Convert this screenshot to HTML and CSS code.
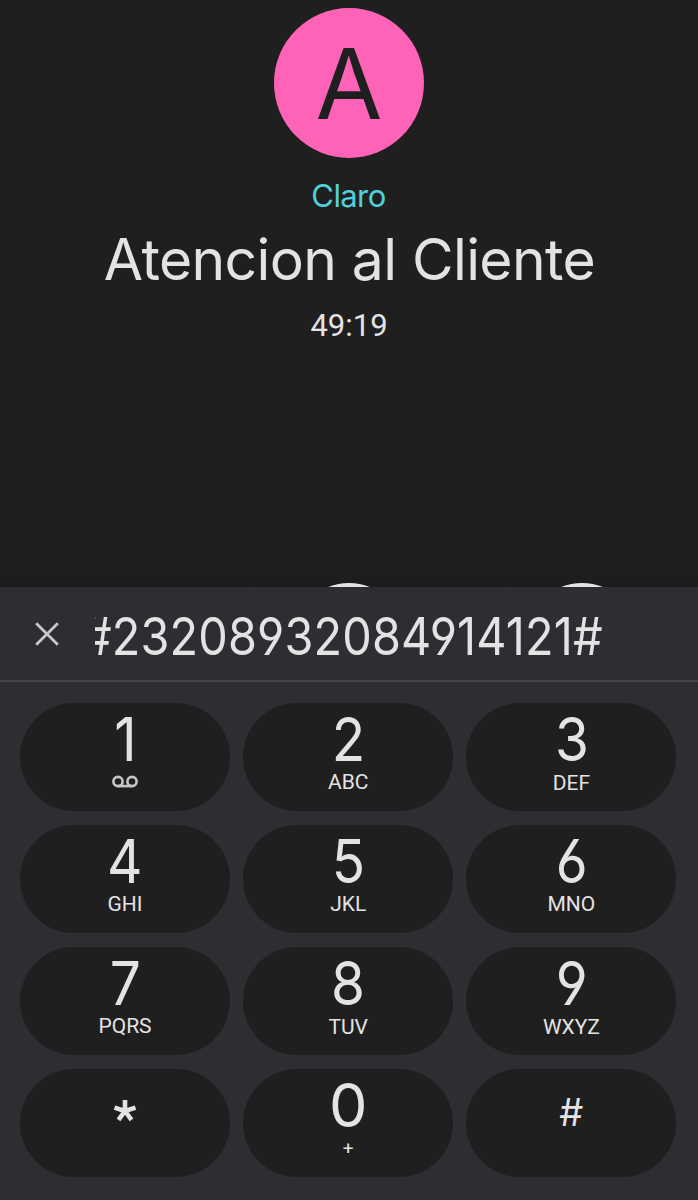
FILE: index.html
```html
<!DOCTYPE html>
<html lang="es">
<head>
  <meta charset="UTF-8">
  <meta name="viewport" content="width=device-width, initial-scale=1.0">
  <title>Atencion al Cliente</title>
  <link rel="stylesheet" href="styles.css">
</head>
<body>

  <div class="call">
    <div class="avatar">A</div>
    <div class="carrier">Claro</div>
    <h1 class="name">Atencion al Cliente</h1>
    <div class="timer">49:19</div>
    <div class="call-actions">
      <span></span>
      <span class="action"></span>
      <span class="action"></span>
    </div>
  </div>

  <div class="dialpad">
    <div class="display">
      <svg class="close" viewBox="0 0 24 24" width="24" height="24">
        <path d="M1.2 1.2L22.8 22.8M22.8 1.2L1.2 22.8" />
      </svg>
      <div class="digits"><span>#23208932084914121#</span></div>
    </div>

    <div class="keys">
      <div class="key">
        <span class="num">1</span>
        <svg class="voicemail" viewBox="0 0 26 13" width="26" height="13">
          <circle cx="6" cy="6.5" r="4.6" />
          <circle cx="20" cy="6.5" r="4.6" />
          <path d="M6 11.1H20" />
        </svg>
      </div>
      <div class="key"><span class="num">2</span><span class="letters">ABC</span></div>
      <div class="key"><span class="num">3</span><span class="letters low">DEF</span></div>
      <div class="key"><span class="num">4</span><span class="letters">GHI</span></div>
      <div class="key"><span class="num">5</span><span class="letters">JKL</span></div>
      <div class="key"><span class="num">6</span><span class="letters">MNO</span></div>
      <div class="key"><span class="num">7</span><span class="letters">PQRS</span></div>
      <div class="key"><span class="num">8</span><span class="letters low">TUV</span></div>
      <div class="key"><span class="num">9</span><span class="letters low">WXYZ</span></div>
      <div class="key symbol">
        <svg class="star" viewBox="-12 -12 24 24" width="24" height="24">
          <path d="M0 0V-11M0 0L10.5 -3.4M0 0L6.5 8.9M0 0L-6.5 8.9M0 0L-10.5 -3.4" />
        </svg>
      </div>
      <div class="key"><span class="num zero">0</span><span class="letters plus">+</span></div>
      <div class="key symbol"><span class="hash">#</span></div>
    </div>
  </div>

</body>
</html>
```

FILE: styles.css
```css
/* General Styles */
body {
  font-family: Inter, Roboto, sans-serif;
  font-feature-settings: "cv03", "cv04";
  background-color: #1f1f1f;
  color: #e3e3e3;
  margin: 0;
  height: 1200px;
  overflow: hidden;
}

/* Call header */
.call {
  display: flex;
  flex-direction: column;
  align-items: center;
  height: 587px;
  box-sizing: border-box;
  padding-top: 8px;
  overflow: hidden;
  background: linear-gradient(#1f1f1f 570px, #1b1b1b 587px);
}

.avatar {
  width: 150px;
  height: 150px;
  border-radius: 50%;
  background-color: #ff63b8;
  color: #1f1f1f;
  font-size: 97px;
  line-height: 152px;
  text-align: center;
  flex-shrink: 0;
}

.carrier {
  color: #4fd1dc;
  font-size: 31px;
  line-height: 40px;
  margin-top: 18px;
  margin-right: 1px;
  letter-spacing: -0.6px;
}

.name {
  margin: 13px 0 0 1px;
  font-size: 57px;
  font-weight: 400;
  line-height: 62px;
  letter-spacing: -0.6px;
  white-space: nowrap;
}

.timer {
  font-family: Roboto, sans-serif;
  font-size: 31px;
  line-height: 40px;
  margin-top: 15px;
}

.call-actions {
  display: grid;
  grid-template-columns: repeat(3, 233px);
  justify-items: center;
  margin-top: 237px;
}

.action {
  width: 112px;
  height: 112px;
  border-radius: 50%;
  background-color: #e3e3e3;
}

/* Dialpad */
.dialpad {
  height: 613px;
  background-color: #2d2e32;
}

.display {
  display: flex;
  align-items: center;
  height: 95px;
  padding: 1px 95px 0 35px;
  box-sizing: border-box;
  border-bottom: 2px solid #434447;
}

.close {
  flex-shrink: 0;
  margin-right: 36px;
  fill: none;
  stroke: #c7c7c9;
  stroke-width: 2.8;
}

.digits {
  flex: 1;
  display: flex;
  justify-content: flex-end;
  overflow: hidden;
  font-size: 52px;
  line-height: 64px;
  letter-spacing: 0.2px;
  margin-top: 5px;
}

.digits span {
  transform: scaleX(0.9);
  transform-origin: right;
}

.keys {
  display: grid;
  grid-template-columns: repeat(3, 210px);
  grid-auto-rows: 108px;
  gap: 14px 13.2px;
  padding: 21px 0 0 20px;
}

.key {
  display: flex;
  flex-direction: column;
  align-items: center;
  border-radius: 54px;
  background-color: #1f1f1f;
}

.num {
  font-size: 61px;
  line-height: 60px;
  margin-top: 6px;
  transform: scaleX(0.9);
}

.zero {
  transform: none;
}

.letters {
  font-family: Roboto, sans-serif;
  font-size: 21px;
  line-height: 24px;
  margin-top: 1px;
}

.low {
  margin-top: 2px;
}

.plus {
  margin-top: 2px;
  font-size: 19px;
}

.voicemail {
  margin-top: 6px;
  fill: none;
  stroke: #c7c7c7;
  stroke-width: 2.6;
}

.symbol {
  padding-top: 31px;
  height: 77px;
}

.star {
  margin-top: -1px;
  margin-right: 1px;
  stroke: #e3e3e3;
  stroke-width: 4.6;
}

.hash {
  font-size: 38px;
  line-height: 25px;
}
```
